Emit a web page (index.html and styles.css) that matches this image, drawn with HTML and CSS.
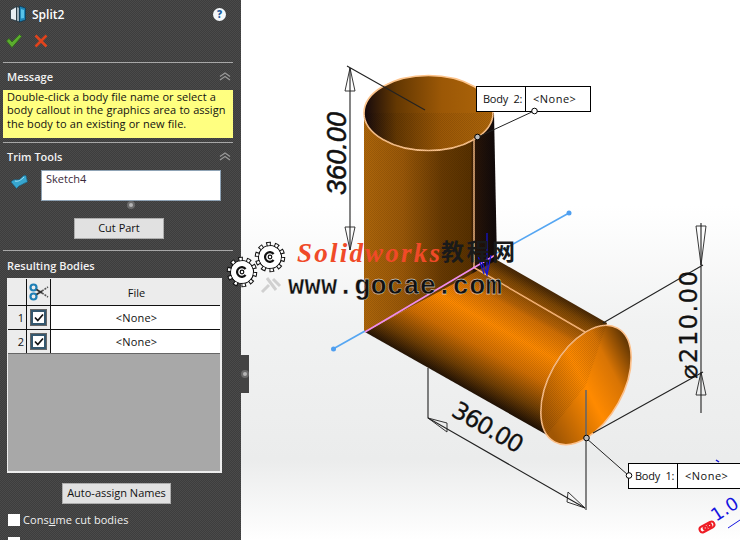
FILE: index.html
```html
<!DOCTYPE html>
<html lang="en">
<head>
<meta charset="utf-8">
<title>Split2</title>
<link rel="stylesheet" href="styles.css">
</head>
<body>
<div class="app">
  <aside class="panel">
    <header class="title-row">
      <svg class="part-icon" viewBox="0 0 16 18" width="16" height="18">
        <path d="M0.500 5 L6.500 1.500 V16 L0.500 14Z" fill="#e8eef2" stroke="#20303a" stroke-width=".8"/>
        <path d="M6.500 1.500 L9.500 2.500 V17 L6.500 16Z" fill="#9fb2bc" stroke="#20303a" stroke-width=".8"/>
        <path d="M9.500 1 L15.500 3 V15 L9.500 17Z" fill="#1f86b8" stroke="#0c3a55" stroke-width=".8"/>
        <path d="M11 4 L14 5 V13 L11 13.500Z" fill="#58c3ea"/>
      </svg>
      <span class="title">Split2</span>
      <span class="help">?</span>
    </header>
    <div class="actions">
      <svg viewBox="0 0 18 16" width="18" height="16"><path d="M1.500 8 L4 5.500 L7 9 L14.500 1.500 L16.500 3.500 L7 14.500Z" fill="#5cad2e" stroke="#2f6a18" stroke-width=".8"/></svg>
      <svg viewBox="0 0 14 14" width="14" height="14"><path d="M1.500 1.500 L12.500 12.500 M12.500 1.500 L1.500 12.500" stroke="#e0431c" stroke-width="2.600" fill="none"/></svg>
    </div>

    <section class="group group-message">
      <div class="group-head"><h2>Message</h2><svg class="chev" viewBox="0 0 12 9" width="12" height="9"><path d="M1 4.500 L6 1 L11 4.500 M1 8 L6 4.500 L11 8" fill="none" stroke="#9a9a9a" stroke-width="1.200"/></svg></div>
      <p class="message">Double-click a body file name or select a body callout in the graphics area to assign the body to an existing or new file.</p>
    </section>

    <section class="group group-trim">
      <div class="group-head"><h2>Trim Tools</h2><svg class="chev" viewBox="0 0 12 9" width="12" height="9"><path d="M1 4.500 L6 1 L11 4.500 M1 8 L6 4.500 L11 8" fill="none" stroke="#9a9a9a" stroke-width="1.200"/></svg></div>
      <div class="trim-row">
        <svg class="trim-icon" viewBox="0 0 18 16" width="18" height="16"><path d="M1 9 C4 5 7 8 10 6 C12 5 13 1.500 16 2.500 L17.500 9 C14 10 12 12 9 13 L6.500 15.500Z" fill="#37a6cf" stroke="#1a5f80" stroke-width=".7"/><path d="M5 8 C8 9 11 7 14 4" stroke="#9fe0f5" stroke-width="1" fill="none"/></svg>
        <div class="list-box">Sketch4</div>
      </div>
      <span class="resize-dot"></span>
      <button class="btn btn-cut" type="button">Cut Part</button>
    </section>

    <section class="group group-bodies">
      <div class="group-head"><h2>Resulting Bodies</h2></div>
      <div class="table-wrap">
        <div class="grid-row grid-head">
          <span class="cell"></span>
          <span class="cell cell-icon">
            <svg viewBox="0 0 20 18" width="20" height="18"><circle cx="4.500" cy="4.500" r="3" fill="none" stroke="#1f7fb5" stroke-width="2.200"/><circle cx="4.500" cy="13.500" r="3" fill="none" stroke="#1f7fb5" stroke-width="2.200"/><path d="M7.500 6.500 L13 10 M7.500 11.500 L13 8" stroke="#333" stroke-width="1.800"/><path d="M13 10 L19 14 M13 8 L19 4" stroke="#555" stroke-width="1.600" stroke-dasharray="2 1"/></svg>
          </span>
          <span class="cell cell-file">File</span>
        </div>
        <div class="grid-row">
          <span class="cell cell-num">1</span>
          <span class="cell cell-icon"><span class="check"><svg viewBox="0 0 10 9" width="10" height="9"><path d="M1 4.500 L3.800 7.500 L9 1.500" fill="none" stroke="#111" stroke-width="1.700"/></svg></span></span>
          <span class="cell cell-value">&lt;None&gt;</span>
        </div>
        <div class="grid-row">
          <span class="cell cell-num">2</span>
          <span class="cell cell-icon"><span class="check"><svg viewBox="0 0 10 9" width="10" height="9"><path d="M1 4.500 L3.800 7.500 L9 1.500" fill="none" stroke="#111" stroke-width="1.700"/></svg></span></span>
          <span class="cell cell-value">&lt;None&gt;</span>
        </div>
      </div>
      <button class="btn btn-auto" type="button">Auto-assign Names</button>
      <label class="opt"><span class="box"></span><span>Cons<u>u</u>me cut bodies</span></label>
      <label class="opt"><span class="box"></span></label>
    </section>
  </aside>

  <main class="canvas">
    <svg class="scene" viewBox="241 0 499 540" width="499" height="540">
      <defs>
        <linearGradient id="bodyV" gradientUnits="userSpaceOnUse" x1="364" y1="0" x2="494" y2="0">
          <stop offset="0" stop-color="#ae660a"/><stop offset=".3" stop-color="#9a5808"/><stop offset=".6" stop-color="#683a02"/><stop offset=".82" stop-color="#583100"/><stop offset=".845" stop-color="#2a1608"/><stop offset="1" stop-color="#120a0a"/>
        </linearGradient>
        <linearGradient id="innerV" gradientUnits="userSpaceOnUse" x1="364" y1="0" x2="494" y2="0">
          <stop offset="0" stop-color="#15090c"/><stop offset=".25" stop-color="#643802"/><stop offset=".6" stop-color="#9c5806"/><stop offset="1" stop-color="#ae660a"/>
        </linearGradient>
        <linearGradient id="bodyH" gradientUnits="userSpaceOnUse" x1="547" y1="435" x2="610" y2="321">
          <stop offset="0" stop-color="#1e1005"/><stop offset=".14" stop-color="#6e3e04"/><stop offset=".34" stop-color="#d06e02"/><stop offset=".54" stop-color="#ff8a00"/><stop offset=".72" stop-color="#d27004"/><stop offset=".76" stop-color="#b56206"/><stop offset=".9" stop-color="#7c4604"/><stop offset="1" stop-color="#3a2006"/>
        </linearGradient>
        <linearGradient id="cap" gradientUnits="userSpaceOnUse" x1="560" y1="430" x2="622" y2="335">
          <stop offset="0" stop-color="#a05604"/><stop offset=".45" stop-color="#ff8a00"/><stop offset=".72" stop-color="#d87404"/><stop offset="1" stop-color="#4e2c04"/>
        </linearGradient>
        <linearGradient id="bg" x1="0" y1="0" x2="0" y2="1">
          <stop offset=".38" stop-color="#fff"/><stop offset=".6" stop-color="#f1f2f2"/><stop offset=".85" stop-color="#ebecec"/><stop offset="1" stop-color="#fff"/>
        </linearGradient>
        <pattern id="dither" width="2" height="2" patternUnits="userSpaceOnUse"><rect width="1" height="1" fill="#000"/><rect x="1" y="1" width="1" height="1" fill="#000"/></pattern>
        <g id="gear">
          <circle r="11.500" fill="#fff" stroke="#111" stroke-width="1.200"/>
          <circle r="13" class="tooth-dark"/>
          <circle r="13" class="tooth-light"/>
          <circle r="10.800" fill="#fff"/>
          <path d="M3.600 -3 A4.800 4.800 0 1 0 3.600 3" fill="none" stroke="#111" stroke-width="2.200"/>
          <circle r="1.800" fill="none" stroke="#111" stroke-width="1.200"/>
        </g>
      </defs>
      <rect x="241" y="0" width="499" height="540" fill="url(#bg)"/>

      <!-- vertical tube -->
      <path d="M364 113 V332 L497 262 L494 113Z" fill="url(#bodyV)"/>
      <ellipse cx="428.500" cy="113" rx="64.500" ry="37.500" fill="url(#innerV)"/>
      <path d="M364 113 A64.500 37.500 0 0 0 493 113 A64.500 37.500 0 0 0 364 113" fill="none" stroke="#fdc48c" stroke-width="1.600"/>
      <path d="M474 138 V268" stroke="#eab07a" stroke-width="1.600"/>

      <!-- horizontal tube -->
      <path d="M365 332 L497 260 L607 323 L586 385 L547 435Z" fill="url(#bodyH)"/>
      <path d="M473 267 L585 332" stroke="#fdb878" stroke-width="1.500"/>
      <ellipse cx="586" cy="385" rx="37" ry="65" transform="rotate(29 586 385)" fill="url(#cap)" stroke="#fdc08a" stroke-width="1.600"/>
      <path d="M364 113 H494 V262 L607 323 L586 385 L547 435 L364 332Z" fill="url(#dither)" opacity=".1"/>

      <!-- axis -->
      <path d="M333 349 L365 331 M497 253 L569 213" stroke="#55a6f2" stroke-width="1.700"/>
      <circle cx="333.500" cy="349" r="2.500" fill="#4f9ff0"/>
      <circle cx="569" cy="213" r="2.500" fill="#4f9ff0"/>
      <path d="M365 332 L497 254" stroke="#f08cec" stroke-width="1.700"/>
      <path d="M487 233 V276 M482 262 L487 275 L491 255 M478 256 L484 274" stroke="#1414d8" stroke-width="1.200" fill="none"/>

      <!-- dimensions -->
      <g class="dim">
        <path d="M347 66 L425 110 M350 68 V250"/>
        <path d="M350 68 L345 91 L355 91Z M350 250 L345 227 L355 227Z" class="arrow"/>
        <path d="M428 368 V418 L585 508 M703 265 L603 323 M703 372 L593 433 M701 223 V413"/>
        <path d="M428 418 L447 423 L447 432Z M585 508 L568 492 L567 502Z M701 265 L696 226 L706 226Z M701 372 L696 395 L706 395Z" class="arrow"/>
      </g>
      <path d="M586 390 V510" stroke="#666" stroke-width="1.600"/>
      <text class="dim-text" transform="translate(346 195) rotate(-90)" textLength="83">360.00</text>
      <text class="dim-text dim-plain" transform="translate(450 415) rotate(30)" textLength="78">360.00</text>
      <text class="dim-text dim-plain" transform="translate(697 379) rotate(-90)" textLength="108">⌀210.00</text>

      <!-- callouts -->
      <g class="callout">
        <path d="M534 111 L478 137" class="leader"/>
        <rect x="476.500" y="86.500" width="114" height="25"/>
        <path d="M525.500 86 V111"/>
        <text x="483" y="103" class="call-text" textLength="40">Body 2:</text>
        <text x="533" y="103" class="call-text">&lt;None&gt;</text>
        <circle cx="534.500" cy="111" r="2.800"/>
        <circle cx="477.500" cy="137" r="2.800" class="node"/>
      </g>
      <g class="callout">
        <path d="M586 438 L628 475" class="leader"/>
        <rect x="628.500" y="463.500" width="130" height="25"/>
        <path d="M677.500 463 V488"/>
        <text x="635" y="480" class="call-text" textLength="40">Body 1:</text>
        <text x="685" y="480" class="call-text">&lt;None&gt;</text>
        <circle cx="629" cy="475.500" r="2.800"/>
        <circle cx="586.500" cy="438" r="2.800" class="node"/>
      </g>

      <!-- annotation lower right -->
      <path d="M716 460 L719 462" stroke="#1414d8" stroke-width="1.500"/>
      <path d="M728 528 L740 520" stroke="#1414e0" stroke-width="1"/>
      <text class="blue-note" transform="translate(716 522) rotate(-33)">1.0</text>
      <g transform="translate(707 527) rotate(-28)" fill="none" stroke="#ee1c24" stroke-width="2">
        <rect x="-8" y="-3" width="16" height="6" rx="3"/><circle cx="-2" r="1.600"/><circle cx="3" r="1.600"/>
      </g>

      <!-- watermark -->
      <use href="#gear" x="242" y="272"/>
      <use href="#gear" x="270" y="257"/>
      <path d="M262 292 L269 285 M273 279 L280 286 M267 278 L276 290" stroke="#d0d0d0" stroke-width="3" fill="none"/>
      <text class="wm-red" x="297" y="262" textLength="143">Solidworks</text>
      <text class="wm-cn" x="441" y="260" textLength="74">教程网</text>
      <text class="wm-url" x="288" y="294" textLength="214">www.gocae.com</text>
    </svg>
    <div class="splitter"><span class="resize-dot"></span></div>
  </main>
</div>
</body>
</html>
```
FILE: styles.css
```css
* { box-sizing: border-box; }
html, body { margin: 0; padding: 0; }
body { width: 740px; height: 540px; overflow: hidden; font-family: "Open Sans", "Noto Sans", sans-serif; font-size: 11px; color: #111; }

.app { display: flex; width: 740px; height: 540px; overflow: hidden; }

.panel {
  width: 241px; flex: none; height: 540px; overflow: hidden; padding: 0 8px 0 3px; color: #fff;
  background-color: #444;
  background-image: repeating-conic-gradient(#3d3d3d 0 25%, #4a4a4a 0 50%);
  background-size: 2px 2px;
}

.title-row { height: 28px; display: flex; align-items: center; padding-left: 7px; }
.part-icon { margin-right: 6px; }
.title { font-size: 12px; font-weight: 600; flex: 1; }
.help { width: 13px; height: 13px; border-radius: 50%; background: #f4f8fb; color: #1f5fa0; font-size: 10px; font-weight: 800; line-height: 13px; text-align: center; margin-right: 7px; }

.actions { height: 26px; display: flex; align-items: center; gap: 11px; padding-left: 2px; margin-bottom: 8px; }

.group { border-top: 1px solid #a8a8a8; }
.group-head { height: 27px; display: flex; align-items: center; justify-content: space-between; padding: 0 2px 1px 4px; }
.group-head h2 { margin: 0; font-size: 11px; font-weight: 600; color: #f2f2f2; }
.group-bodies .group-head { padding: 1px 2px 0 4px; }
.chev { display: block; }

.message { margin: 0 0 4px; height: 48px; background: #ffff80; color: #111; padding: 0 0 0 4px; font-size: 11px; line-height: 13.400px; letter-spacing: .03px; word-spacing: .3px; }

.group-trim { display: flex; flex-direction: column; padding-bottom: 11px; }
.trim-row { display: flex; align-items: flex-start; }
.trim-icon { margin: 3px 0 0 7px; }
.list-box { width: 180px; height: 31px; margin-left: 13px; background: #fff; border: 1px solid #8fa3b5; color: #3a2a3a; padding: 0 4px; line-height: 15px; font-size: 11px; }

.resize-dot { display: block; width: 8px; height: 8px; border-radius: 50%; background: #b4b4b4; border: 2px solid #6a6a6a; }
.group-trim .resize-dot { align-self: flex-start; margin: 0 0 9px 124px; }

.btn { display: block; height: 21px; padding: 0 0 2px; background: #e1e1e1; border: 1px solid #adadad; font: inherit; color: #111; }
.btn-cut { width: 90px; margin-left: 71px; }
.btn-auto { width: 109px; margin: 10px 0 0 59px; }

.table-wrap { width: 215px; height: 195px; margin-left: 4px; background: #a8a8a8; border: 2px solid #eee; border-width: 1px 2px 2px 1px; }
.grid-row { display: grid; grid-template-columns: 19px 24px 1fr; height: 24px; background: #fff; border-bottom: 1px solid #111; color: #111; }
.grid-row:last-child { border-bottom: 1px solid #666; }
.grid-head { height: 27px; background: #ececec; }
.cell { display: flex; align-items: center; justify-content: center; border-right: 1px solid #111; }
.cell:last-child { border-right: 0; }
.cell-num { justify-content: flex-end; padding-right: 2px; background: #ececec; }
.cell-icon { background: #ececec; }
.cell-file { padding: 1px 0 0 2px; }
.check { width: 15px; height: 15px; display: flex; align-items: center; justify-content: center; background: #fff; border: 2px solid #34576e; outline: 1px solid #666; }
.cell-value { letter-spacing: .2px; padding-left: 2px; }

.opt { display: flex; align-items: center; gap: 3px; height: 23px; margin: 0 0 0 5px; color: #f0f0f0; font-size: 11px; letter-spacing: .05px; }
.btn-auto + .opt { margin-top: 4px; }
.box { width: 12px; height: 12px; background: #fff; flex: none; }

.canvas { flex: 1; position: relative; }
.scene { display: block; overflow: visible; position: relative; z-index: 2; }
.splitter { position: absolute; z-index: 3; left: -1px; top: 355px; width: 9px; height: 38px; background: #444; display: flex; align-items: center; justify-content: center; }

.dim path { fill: none; stroke: #222; stroke-width: 1.100; }
.dim .arrow { stroke-width: .9; }
.dim-text { font-family: "Liberation Sans", sans-serif; font-style: italic; font-size: 27px; fill: #111; stroke: #111; stroke-width: .5; }
.dim-plain { font-style: normal; font-family: "DejaVu Sans", sans-serif; font-size: 24px; stroke-width: .3; }

.callout rect { fill: #fff; stroke: #000; stroke-width: 1; }
.callout path { stroke: #000; stroke-width: 1; fill: none; }
.callout .leader { stroke: #222; }
.callout circle { fill: #fff; stroke: #000; stroke-width: 1; }
.callout .node { fill: #bbb; }
.call-text { font-family: "Open Sans", sans-serif; font-size: 11px; fill: #111; letter-spacing: .5px; word-spacing: 3px; }

.blue-note { font-family: "DejaVu Sans", sans-serif; font-size: 18px; font-weight: 400; fill: #1414e0; }

.tooth-dark { fill: none; stroke: #111; stroke-width: 4.500; stroke-dasharray: 4.500 3.670; }
.tooth-light { fill: none; stroke: #fff; stroke-width: 2.500; stroke-dasharray: 2.500 5.670; stroke-dashoffset: -1; }

.wm-red { font-family: "Liberation Serif", serif; font-style: italic; font-weight: 700; font-size: 27px; fill: #f04a28; }
.wm-cn { font-family: "Noto Sans CJK SC", sans-serif; font-weight: 700; font-size: 23px; fill: #1a1a1a; }
.wm-url { font-family: "Liberation Mono", monospace; font-weight: 700; font-size: 27px; fill: #111; stroke: #fff; stroke-width: .3; }
```
